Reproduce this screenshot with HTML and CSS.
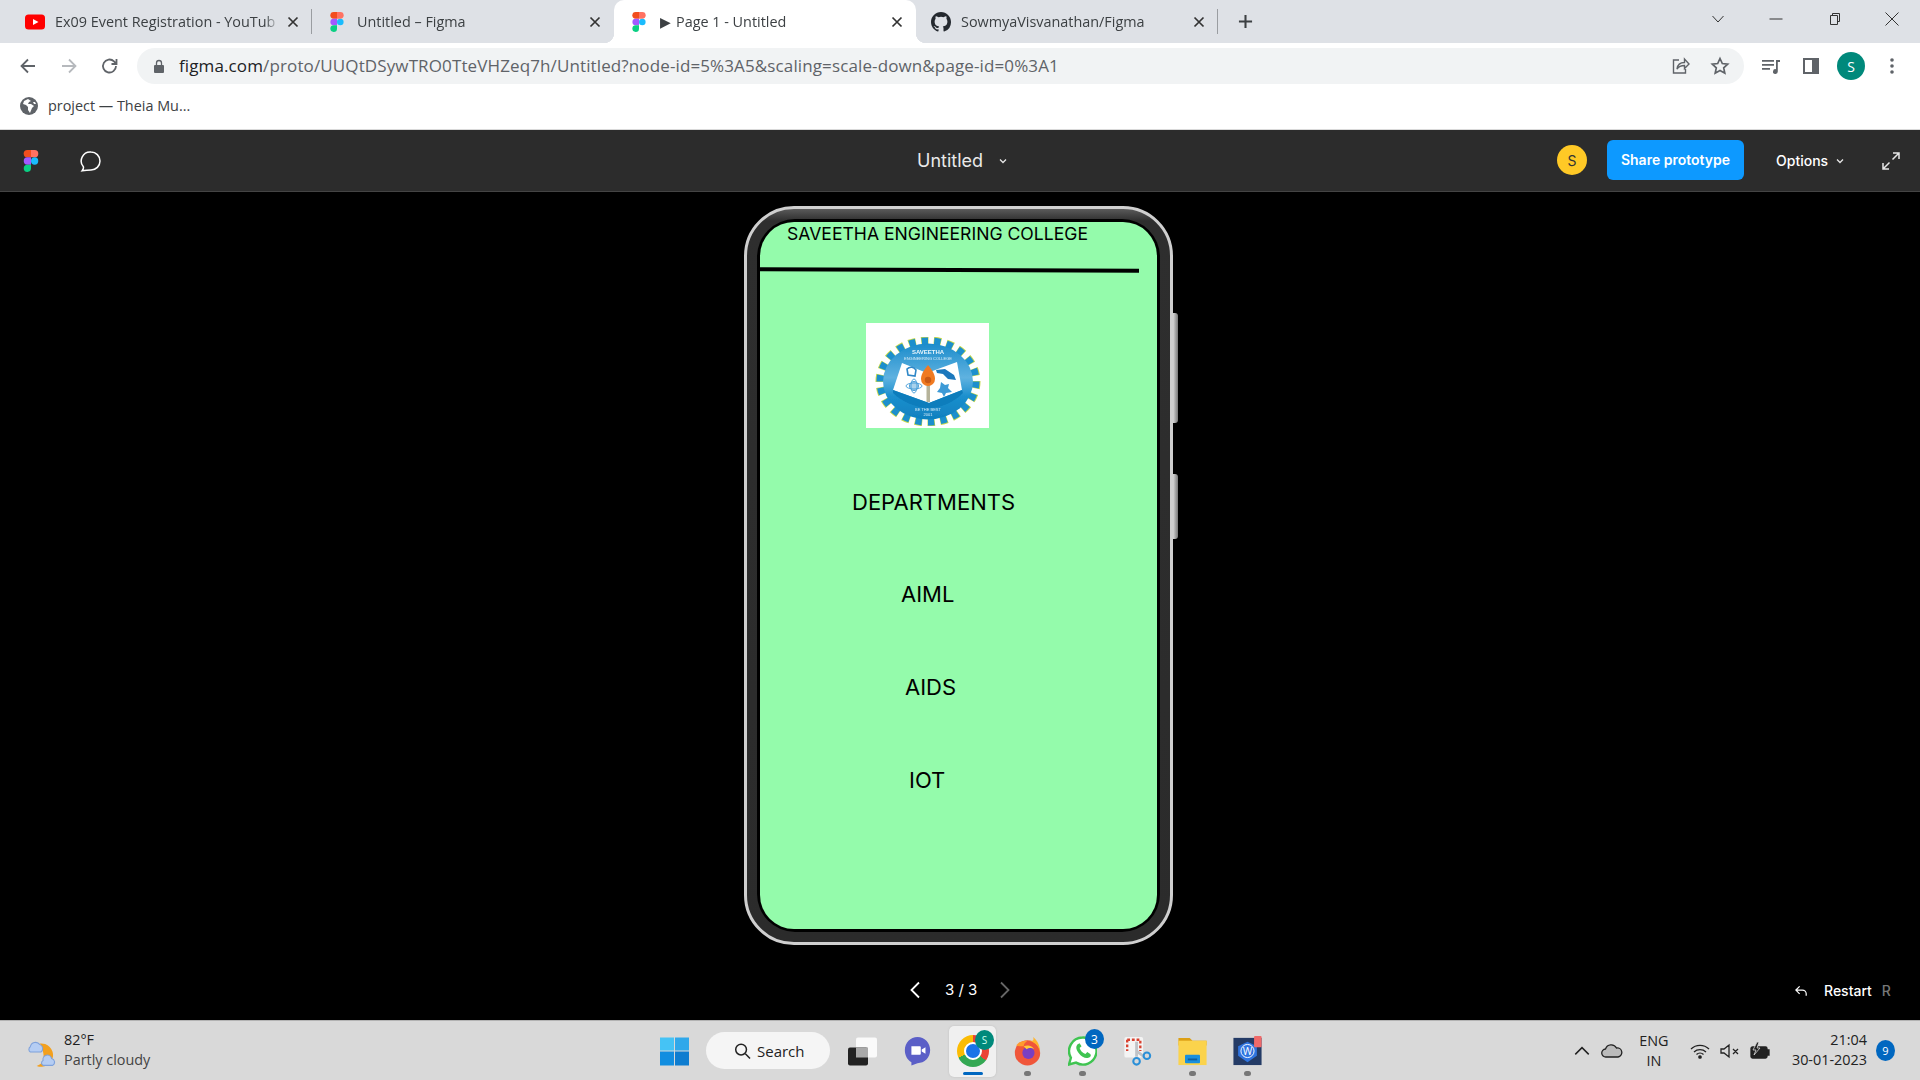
FILE: index.html
```html
<!DOCTYPE html>
<html lang="en">
<head>
<meta charset="utf-8">
<title>Page 1 - Untitled</title>
<link rel="stylesheet" href="styles.css">
</head>
<body>
<div class="tabstrip">
  <div class="tab sep">
    <svg class="fav" viewBox="0 0 20 16"><rect width="20" height="15" y="0.5" rx="3.5" fill="#f00"/><path d="M8 5l5.500 3L8 11z" fill="#fff"/></svg>
    <span class="tab-title">Ex09 Event Registration - YouTub</span>
    <svg class="tab-x" viewBox="0 0 12 12"><path d="M1.500 1.500l9 9M10.500 1.500l-9 9"/></svg>
  </div>
  <div class="tab">
    <svg class="fav" viewBox="0 0 20 20"><use href="#figma"/></svg>
    <span class="tab-title">Untitled – Figma</span>
    <svg class="tab-x" viewBox="0 0 12 12"><path d="M1.500 1.500l9 9M10.500 1.500l-9 9"/></svg>
  </div>
  <div class="tab active">
    <svg class="fav" viewBox="0 0 20 20"><use href="#figma"/></svg>
    <span class="tab-title"><span class="play">▶</span>Page 1 - Untitled</span>
    <svg class="tab-x" viewBox="0 0 12 12"><path d="M1.500 1.500l9 9M10.500 1.500l-9 9"/></svg>
  </div>
  <div class="tab sep">
    <svg class="fav" viewBox="0 0 16 16"><path fill="#24292f" d="M8 0C3.580 0 0 3.580 0 8c0 3.540 2.290 6.530 5.470 7.590.4.070.55-.17.55-.38v-1.340c-2.230.48-2.700-1.070-2.700-1.070-.36-.92-.89-1.170-.89-1.170-.73-.5.050-.49.050-.49.800.06 1.230.83 1.230.83.710 1.220 1.870.87 2.330.66.070-.52.280-.87.510-1.070-1.780-.2-3.640-.89-3.640-3.950 0-.87.310-1.590.82-2.150-.08-.2-.36-1.020.08-2.120 0 0 .67-.21 2.200.82a7.600 7.600 0 0 1 4 0c1.530-1.040 2.200-.82 2.200-.82.440 1.100.16 1.920.08 2.120.51.560.82 1.270.82 2.150 0 3.070-1.870 3.750-3.650 3.950.29.250.54.730.54 1.480v2.200c0 .21.150.46.550.38A8 8 0 0 0 16 8c0-4.420-3.580-8-8-8z"/></svg>
    <span class="tab-title">SowmyaVisvanathan/Figma</span>
    <svg class="tab-x" viewBox="0 0 12 12"><path d="M1.500 1.500l9 9M10.500 1.500l-9 9"/></svg>
  </div>
  <svg class="new-tab" viewBox="0 0 16 16"><path d="M8 1v14M1 8h14"/></svg>
  <div class="win-controls">
    <svg class="wc wc-chev" viewBox="0 0 14 14"><path d="M1.500 4l5.500 6 5.500-6"/></svg>
    <svg class="wc" viewBox="0 0 14 14"><path d="M0.500 7h13"/></svg>
    <svg class="wc" viewBox="0 0 14 14"><path d="M3.500 3.500h7v9h-7zM5.500 3.500v-2h7v8h-2"/></svg>
    <svg class="wc" viewBox="0 0 14 14"><path d="M0.500 0.500l13 13M13.500 0.500l-13 13"/></svg>
  </div>
</div>

<div class="toolbar">
  <svg class="nav-icon" viewBox="0 0 20 20"><path d="M17 10H4M10 3.500L3.500 10l6.500 6.500"/></svg>
  <svg class="nav-icon dim" viewBox="0 0 20 20"><path d="M3 10h13M10 3.500l6.500 6.500-6.500 6.500"/></svg>
  <svg class="nav-icon" viewBox="0 0 20 20"><path d="M16 10a6.500 6.500 0 1 1-2-4.700L16.500 8M16.500 3v5h-5"/></svg>
  <div class="omnibox">
    <svg class="lock" viewBox="0 0 12 14"><path d="M2 6h8a1 1 0 0 1 1 1v6a1 1 0 0 1-1 1H2a1 1 0 0 1-1-1V7a1 1 0 0 1 1-1z" fill="#5f6368"/><path d="M3.500 6V4a2.500 2.500 0 0 1 5 0v2" fill="none" stroke="#5f6368" stroke-width="1.300"/></svg>
    <span class="url"><span class="url-host">figma.com</span>/proto/UUQtDSywTRO0TteVHZeq7h/Untitled?node-id=5%3A5&amp;scaling=scale-down&amp;page-id=0%3A1</span>
    <svg class="omni-icon" viewBox="0 0 20 20"><path d="M9 4H3.500v13h12v-4M7 13c.5-4 3.500-6.500 7.500-6.500V3L19 8l-4.500 4.500V9.500C11 9.500 8.500 10.800 7 13z"/></svg>
    <svg class="omni-icon star" viewBox="0 0 20 20"><path d="M10 2.500l2.300 5 5.400.6-4 3.700 1.100 5.400L10 14.500l-4.800 2.700 1.100-5.400-4-3.700 5.400-.6z"/></svg>
  </div>
  <svg class="ext-icon ext-media" viewBox="0 0 20 20"><path d="M1 4h12v1.800H1zM1 8h12v1.800H1zM1 12h8v1.800H1zM15 4h4v2h-2.200v9.500a2.400 2.400 0 1 1-1.800-2.300z" fill="#5f6368"/></svg>
  <svg class="ext-icon ext-side" viewBox="0 0 20 20"><path d="M2 2h16v16H2zM4 4v12h7V4z" fill="#5f6368" fill-rule="evenodd"/></svg>
  <div class="profile">S</div>
  <svg class="ext-icon dots" viewBox="0 0 20 20"><circle cx="10" cy="4" r="1.800"/><circle cx="10" cy="10" r="1.800"/><circle cx="10" cy="16" r="1.800"/></svg>
</div>

<div class="bookmarks">
  <svg class="globe" viewBox="0 0 18 18"><circle cx="9" cy="9" r="9" fill="#5f6368"/><path d="M8 2l-4 2-1 3 3 1 2 2v3l2 3 2-5 2-2-3-2-3 0 1-2 2-1zM15 5l-2 0 1 2 2 0z" fill="#fff"/></svg>
  <span class="bm-label">project — Theia Mu...</span>
</div>

<header class="figbar">
  <svg class="fig-logo" viewBox="0 0 20 20"><use href="#figma"/></svg>
  <svg class="comment" viewBox="0 0 24 24"><path d="M12 3a9 9 0 0 1 0 18c-2.800 0-6 .3-8.800.8 1-1.400 1.500-2.700 1.200-4A9 9 0 0 1 12 3z"/></svg>
  <div class="fig-title"><span>Untitled</span><svg class="mini-chev" viewBox="0 0 8 6"><path d="M1 1.500l3 3 3-3"/></svg></div>
  <div class="avatar">S</div>
  <button class="share">Share prototype</button>
  <div class="options"><span>Options</span><svg class="mini-chev" viewBox="0 0 8 6"><path d="M1 1.500l3 3 3-3"/></svg></div>
  <svg class="expand" viewBox="0 0 20 20"><path d="M12 2h6v6M18 2l-6.500 6.500M2 12v6h6M2 18l6.500-6.500"/></svg>
</header>

<main class="stage">
  <div class="phone">
    <span class="side-btn btn-a"></span>
    <span class="side-btn btn-b"></span>
    <div class="bezel">
      <div class="screen">
        <p class="college">SAVEETHA ENGINEERING COLLEGE</p>
        <div class="rule"></div>
        <div class="logo">
          <svg viewBox="0 0 123 105" width="123" height="105">
            <defs>
              <filter id="soft" x="-5%" y="-5%" width="110%" height="110%"><feGaussianBlur stdDeviation="0.6"/></filter>
              <linearGradient id="ringfill" x1="0" y1="0" x2="0" y2="1"><stop offset="0" stop-color="#1c8ccb"/><stop offset=".45" stop-color="#5fb2e0"/><stop offset=".7" stop-color="#1b8fcd"/><stop offset="1" stop-color="#0f80bf"/></linearGradient>
            </defs>
            <g filter="url(#soft)">
              <ellipse cx="62" cy="58.500" rx="47.500" ry="40" fill="none" stroke="#c6d84a" stroke-width="10" pathLength="44" stroke-dasharray="1.160 .84" stroke-dashoffset=".08"/>
              <ellipse cx="62" cy="58.500" rx="47" ry="39.500" fill="none" stroke="#1a8fcd" stroke-width="9" pathLength="44" stroke-dasharray="1 1"/>
              <ellipse cx="62" cy="58.500" rx="45" ry="38" fill="url(#ringfill)"/>
              <path d="M36 40l25 10 30-11 5 28-33 13-36-13z" fill="#fff"/>
              <path d="M27 67l36 13 33-13 1 3c-8 8-20 15-34 15S35 78 27 70z" fill="#0f7dbc"/>
              <path d="M41 46c3-3 7-2 9 1l-1 6-7-1z" fill="none" stroke="#2d87c7" stroke-width="1.600"/>
              <path d="M70 47l9-1 9 6 2 5-8-1-5-5-6-1z" fill="#1d78bd"/>
              <circle cx="48" cy="63" r="4.500" fill="#a9d2ec" stroke="#4a9ed8" stroke-width="1"/>
              <ellipse cx="48" cy="63" rx="8" ry="3" fill="none" stroke="#4a9ed8" stroke-width=".9"/>
              <ellipse cx="48" cy="63" rx="3" ry="7" fill="none" stroke="#4a9ed8" stroke-width=".9"/>
              <path d="M75 59l4 3 4-1-1 4 4 4-6 1-2 4-2-4-5-1 3-4z" fill="#3c9ad6"/>
              <rect x="60.500" y="60" width="3.500" height="19" fill="#b6b39a"/>
              <path d="M62 42c5 6 7 10 7 14a7 7 0 0 1-14 0c0-4 2-8 7-14z" fill="#f07a22"/>
              <circle cx="62" cy="57" r="3.200" fill="#c85a14"/>
              <text x="62" y="31" text-anchor="middle" class="logo-t1">SAVEETHA</text>
              <text x="62" y="37" text-anchor="middle" class="logo-t2">ENGINEERING COLLEGE</text>
              <text x="62" y="88" text-anchor="middle" class="logo-t2">BE THE BEST</text>
              <text x="62" y="93" text-anchor="middle" class="logo-t2">2001</text>
            </g>
          </svg>
        </div>
        <p class="dept dept-head">DEPARTMENTS</p>
        <p class="dept dept-aiml">AIML</p>
        <p class="dept dept-aids">AIDS</p>
        <p class="dept dept-iot">IOT</p>
      </div>
    </div>
  </div>
  <div class="pager">
    <svg class="pg-chev" viewBox="0 0 12 18"><path d="M10 1.500L2.500 9l7.500 7.500"/></svg>
    <span class="pg-text">3 / 3</span>
    <svg class="pg-chev off" viewBox="0 0 12 18"><path d="M2 1.500L9.500 9 2 16.500"/></svg>
  </div>
  <div class="restart">
    <svg class="rs-icon" viewBox="0 0 16 14"><path d="M6 2L2 6l4 4M2 6h7a4 4 0 0 1 4 4v2"/></svg>
    <span>Restart</span><span class="rs-key">R</span>
  </div>
</main>

<footer class="taskbar">
  <div class="weather">
    <svg class="wx" viewBox="0 0 32 32"><path d="M14 9a11 11 0 1 1-3 21c7-2 9-9 3-21z" fill="#f3a01e"/><path d="M5 12a5 5 0 0 1 9-2 4 4 0 0 1 1 7H5a3 3 0 0 1 0-5z" fill="#b5cdf3" stroke="#7fa2dc"/><path d="M17 25a4 4 0 0 1 8-2 3.500 3.500 0 0 1 1 6.500h-9a2.500 2.500 0 0 1 0-4.500z" fill="#b5cdf3" stroke="#7fa2dc"/></svg>
    <div class="wx-text"><span class="wx-temp">82°F</span><span class="wx-desc">Partly cloudy</span></div>
  </div>
  <div class="apps">
    <div class="cell"><svg class="i29" viewBox="0 0 29 29"><path d="M0 1h14v13H0z" fill="#45c3f5"/><path d="M15 1h14v13H15z" fill="#30a8ea"/><path d="M0 15h14v14H0z" fill="#128ee0"/><path d="M15 15h14v14H15z" fill="#0e7dd0"/></svg></div>
    <div class="search-pill"><svg class="search-i" viewBox="0 0 18 18"><circle cx="7.500" cy="7.500" r="5.700"/><path d="M12 12l5 5"/></svg><span>Search</span></div>
    <div class="cell"><svg class="i29" viewBox="0 0 29 29"><rect x="8" y="1" width="21" height="20" rx="2" fill="#fafafa"/><rect y="11" width="20" height="18" rx="2" fill="#222"/><rect x="8" y="11" width="12" height="10" fill="#a9a9a9"/></svg></div>
    <div class="cell"><svg class="i29" viewBox="0 0 29 32"><path d="M14.500 1C22 1 28 7 28 15s-6 14-13.500 14L8 31.500V28C3.500 25.500 1 20.500 1 15 1 7 7 1 14.500 1z" fill="#5b5fc7"/><path d="M8 11h9a1 1 0 0 1 1 1v7a1 1 0 0 1-1 1H8zM19 14.500l4-2.500v7l-4-2.500z" fill="#fff"/></svg></div>
    <div class="cell cell-on">
      <div class="chrome"><span class="chrome-core"></span></div>
      <span class="chrome-badge">S</span>
      <span class="run-bar"></span>
    </div>
    <div class="cell"><svg class="i29" viewBox="0 0 30 32"><circle cx="15" cy="18" r="13.500" fill="#f0563a"/><path d="M15 5c6 0 13 5 13 13 1-7-2-13-7-17 1 3 0 4-1 4z" fill="#ffb52e"/><path d="M3 10c3-4 7-5 12-5-3 2-4 4-4 6-3 0-6 0-8-1z" fill="#ff9a2e"/><circle cx="16" cy="18" r="6.500" fill="#7a3fc1"/><path d="M11 11c4-2 9-1 11 3-3-2-6-1-8 0z" fill="#ffca3a"/></svg><span class="run-dot"></span></div>
    <div class="cell"><svg class="i29" viewBox="0 0 30 30"><path d="M15 1a14 14 0 0 0-12 21L1 29l7.300-2A14 14 0 1 0 15 1z" fill="#fff" stroke="#3fc451" stroke-width="2.500"/><path d="M10 8c-2 2-2 5 1 9s7 6 10 5 3-3 2-4l-3-2-2 2c-3-1-5-3-6-6l2-2-2-3z" fill="#3fc451"/></svg><span class="count">3</span><span class="run-dot"></span></div>
    <div class="cell"><svg class="i29" viewBox="0 0 30 32"><rect x="1" y="1" width="20" height="22" rx="2" fill="#f4f4f4"/><path d="M4 4h14v12" fill="none" stroke="#d9412f" stroke-width="2.500" stroke-dasharray="3 2"/><path d="M4 4v12" fill="none" stroke="#d9412f" stroke-width="2.500" stroke-dasharray="3 2"/><path d="M14 6v16M14 16l8 6" stroke="#bfc3c8" stroke-width="3" fill="none"/><circle cx="14" cy="27" r="3.500" fill="none" stroke="#2a8fd8" stroke-width="2.200"/><circle cx="25" cy="21" r="3.500" fill="none" stroke="#2a8fd8" stroke-width="2.200"/></svg></div>
    <div class="cell"><svg class="i29" viewBox="0 0 30 32"><path d="M0 2h12l3 3h15v5H0z" fill="#dc9f14"/><rect y="5" width="30" height="26" fill="#fbd34c"/><rect x="7" y="20" width="16" height="9" rx="1" fill="#1a8fdc"/><rect x="10" y="24" width="10" height="2" fill="#0d5f9f"/></svg><span class="run-dot"></span></div>
    <div class="cell"><svg class="i29" viewBox="0 0 30 32"><rect y="2" width="30" height="29" fill="#243b66"/><path d="M15 6l10 5v10l-10 7-10-7V11z" fill="#2f74e0"/><circle cx="15" cy="16" r="7" fill="none" stroke="#fff" stroke-width="1"/><text x="15" y="20" text-anchor="middle" class="word-w">W</text><rect x="22" y="0" width="8" height="12" rx="1" fill="#ef6a6a"/></svg><span class="run-dot"></span></div>
  </div>
  <div class="tray">
    <svg class="tray-i chev-up" viewBox="0 0 16 16"><path d="M2 11l6-6 6 6"/></svg>
    <svg class="tray-cloud" viewBox="0 0 22 18"><path d="M5 15a4 4 0 0 1-.5-8A6 6 0 0 1 15.500 6 4.500 4.500 0 0 1 17 15z" fill="#bbb" stroke="#222" stroke-width="1.300"/></svg>
    <div class="lang"><span>ENG</span><span>IN</span></div>
    <svg class="tray-i wifi" viewBox="0 0 20 16"><path d="M1 6a13 13 0 0 1 18 0M4 9a9 9 0 0 1 12 0M6.500 11.500a5 5 0 0 1 7 0"/><circle cx="10" cy="14" r="1.200" fill="#222"/></svg>
    <svg class="tray-i sound" viewBox="0 0 20 16"><path d="M1 6h3l5-4v12l-5-4H1zM13 6l5 5M18 6l-5 5"/></svg>
    <svg class="tray-i battery" viewBox="0 0 22 18"><rect x="2" y="5" width="16" height="11" rx="1.500" fill="#222"/><path d="M18 8h2v5h-2" fill="#222"/><path d="M8 0L4 8h3l-2 5 6-7H8l2-6z" fill="#222" stroke="#d9d9d9" stroke-width=".8"/></svg>
    <div class="clock"><span>21:04</span><span>30-01-2023</span></div>
    <span class="notif">9</span>
  </div>
</footer>

<svg class="defs" width="0" height="0">
  <defs>
    <g id="figma">
      <path d="M10 0H6.700a3.300 3.300 0 0 0 0 6.700H10z" fill="#f24e1e"/>
      <path d="M10 0h3.300a3.300 3.300 0 0 1 0 6.700H10z" fill="#ff7262"/>
      <path d="M10 6.700H6.700a3.300 3.300 0 0 0 0 6.600H10z" fill="#a259ff"/>
      <circle cx="13.300" cy="10" r="3.300" fill="#1abcfe"/>
      <path d="M10 13.300H6.700a3.300 3.300 0 1 0 3.300 3.400z" fill="#0acf83"/>
    </g>
  </defs>
</svg>
</body>
</html>
```

FILE: styles.css
```css
* { box-sizing: border-box; margin: 0; padding: 0; }
html, body { width: 1920px; height: 1080px; overflow: hidden; }
body { font-family: "Open Sans", "Liberation Sans", sans-serif; display: flex; flex-direction: column; background: #000; }
svg { display: block; flex: none; }
.defs { position: absolute; }

/* tab strip */
.tabstrip { height: 43px; flex: none; background: #dee1e6; display: flex; align-items: stretch; padding-left: 10px; }
.tab { width: 302px; display: flex; align-items: center; padding: 0 11px 0 15px; position: relative; font-size: 14.400px; color: #3c4043; }
.tab.sep::after { content: ""; position: absolute; right: 0; top: 9px; bottom: 9px; width: 1px; background: #9a9da1; }
.tab.active { background: #fff; border-radius: 10px 10px 0 0; color: #3c4043; }
.tab.active::before, .tab.active::after { content: ""; position: absolute; bottom: 0; width: 10px; height: 10px; }
.tab.active::before { left: -10px; background: radial-gradient(circle at 0 0, #dee1e6 10px, #fff 10.500px); }
.tab.active::after { right: -10px; background: radial-gradient(circle at 100% 0, #dee1e6 10px, #fff 10.500px); }
.fav { width: 20px; height: 20px; margin-right: 10px; }
.tab-title { flex: 1; min-width: 0; white-space: nowrap; -webkit-mask-image: linear-gradient(to left, transparent 0, #000 14px); mask-image: linear-gradient(to left, transparent 0, #000 14px); }
.play { font-size: 14px; margin: 0 5px 0 1px; color: #3c4043; vertical-align: 0; }
.tab-x { width: 12px; height: 12px; margin: 0 2px 0 8px; fill: none; stroke: #333; stroke-width: 1.700; }
.new-tab { width: 15px; height: 15px; margin: 14px 0 0 20px; fill: none; stroke: #3c4043; stroke-width: 2.200; }
.win-controls { margin-left: auto; display: flex; align-items: center; gap: 44px; padding: 0 21px 6px 0; }
.wc { width: 14px; height: 14px; fill: none; stroke: #333; stroke-width: 1; }

/* toolbar */
.toolbar { height: 42px; flex: none; background: #fff; display: flex; align-items: center; padding: 4px 0 0 18px; }
.nav-icon { width: 20px; height: 20px; margin-right: 21px; fill: none; stroke: #5f6368; stroke-width: 1.800; }
.nav-icon.dim { stroke: #b6b9bd; }
.omnibox { width: 1607px; height: 36px; margin-left: -4px; background: #f1f3f4; border-radius: 18px; display: flex; align-items: center; padding: 0 14px 0 16px; font-size: 17px; }
.lock { width: 12px; height: 14px; margin-right: 14px; }
.url { flex: 1; color: #5f6368; white-space: nowrap; letter-spacing: 0.120px; line-height: 24px; padding-bottom: 1px; }
.url-host { color: #202124; }
.omni-icon { width: 20px; height: 20px; margin-left: 20px; fill: none; stroke: #5f6368; stroke-width: 1.400; }
.star { stroke-width: 1.700; }
.ext-icon { width: 20px; height: 20px; }
.ext-media { margin-left: 17px; }
.ext-side { margin-left: 20px; }
.profile { width: 28px; height: 28px; margin-left: 16px; border-radius: 50%; background: #00897b; color: #fff; font-size: 14px; display: flex; align-items: center; justify-content: center; }
.dots { fill: #5f6368; margin-left: 17px; }

/* bookmarks */
.bookmarks { height: 45px; flex: none; background: #fff; border-bottom: 1px solid #d9d9d9; display: flex; align-items: center; padding: 0 0 3px 20px; font-size: 14.400px; color: #3c4043; }
.globe { width: 18px; height: 18px; margin-right: 10px; }

/* figma bar */
.figbar { height: 62px; flex: none; background: #2c2c2c; border-bottom: 1px solid #444; display: flex; align-items: center; padding-left: 21px; color: #fff; font-family: Inter, sans-serif; }
.fig-logo { width: 20px; height: 20px; transform: scale(1.100); }
.comment { width: 24px; height: 24px; margin-left: 38px; fill: none; stroke: #fff; stroke-width: 1.500; }
.fig-title { display: flex; align-items: center; margin-left: 814px; font-size: 18px; color: #e9e9e9; width: 593px; }
.mini-chev { width: 8px; height: 6px; margin-left: 16px; fill: none; stroke: #e6e6e6; stroke-width: 1.300; }
.avatar { width: 30px; height: 30px; border-radius: 50%; background: #ffc926; color: #333; font-size: 14px; display: flex; align-items: center; justify-content: center; margin: 0 0 1px 47px; }
.share { width: 137px; height: 40px; margin: 0 0 1px 20px; padding-bottom: 2px; border: 0; border-radius: 6px; background: #0d99ff; color: #fff; font: 600 14px Inter, sans-serif; }
.options { display: flex; align-items: center; margin-left: 32px; font-size: 14px; font-weight: 500; }
.options .mini-chev { margin-left: 8px; }
.expand { width: 20px; height: 20px; margin-left: 37px; fill: none; stroke: #e6e6e6; stroke-width: 1.500; }

/* stage */
.stage { flex: 1; min-height: 0; background: #000; position: relative; padding: 14px 0 0 744px; }
.phone { width: 429px; height: 739px; position: relative; border: 3px solid #cfcfcf; border-radius: 50px; background: linear-gradient(#5a5a5a 0, #2e2e2e 12px, #2b2b2b 100%); padding: 10px; }
.side-btn { position: absolute; left: 426px; width: 5px; background: linear-gradient(to right, #d6d6d6, #777); border-radius: 0 3px 3px 0; }
.btn-a { top: 104px; height: 110px; }
.btn-b { top: 265px; height: 65px; }
.bezel { width: 100%; height: 100%; background: #000; border-radius: 38px; padding: 3px; }
.screen { width: 100%; height: 100%; background: #94fbab; border-radius: 34px; overflow: hidden; color: #000; font-family: Inter, sans-serif; }
.college { font-size: 17.600px; line-height: 22px; margin: 1px 0 0 27px; white-space: nowrap; }
.rule { width: 379px; height: 4px; margin-top: 23px; background: #000; transform: rotate(0.2deg); }
.logo { width: 123px; height: 105px; margin: 51px 0 0 106px; background: #fff; overflow: hidden; }
.logo-t1 { font: 700 6px "Liberation Sans", sans-serif; fill: #eaf6fc; }
.logo-t2 { font: 400 4px "Liberation Sans", sans-serif; fill: #d9edf8; }
.word-w { font: 11px "Open Sans", sans-serif; fill: #fff; }
.dept { font-size: 22px; line-height: 28px; white-space: nowrap; }
.dept-head { margin: 60px 0 0 92px; }
.dept-aiml { margin: 64px 0 0 141px; }
.dept-aids { margin: 65px 0 0 145px; }
.dept-iot { margin: 65px 0 0 149px; }
.pager { position: absolute; left: 909px; top: 788px; display: flex; align-items: center; color: #fff; font: 400 15px Inter, sans-serif; }
.pg-chev { width: 12px; height: 18px; fill: none; stroke: #fff; stroke-width: 1.800; }
.pg-chev.off { stroke: #666; }
.pg-text { margin: 0 22px 0 24px; }
.restart { position: absolute; left: 1794px; top: 790px; display: flex; align-items: center; color: #fff; font: 500 14px Inter, sans-serif; }
.rs-icon { width: 15px; height: 14px; margin-right: 15px; fill: none; stroke: #fff; stroke-width: 1.300; }
.rs-key { color: #777; margin-left: 10px; }

/* taskbar */
.taskbar { height: 60px; flex: none; background: #d9d9d9; border-top: 1px solid #b3b3b3; display: flex; align-items: center; position: relative; }
.weather { width: 647px; display: flex; align-items: center; padding-left: 25px; }
.wx { width: 34px; height: 34px; margin-right: 5px; }
.wx-text { display: flex; flex-direction: column; font-size: 14.400px; line-height: 20px; color: #1f1f1f; padding-bottom: 2px; }
.wx-desc { color: #444; }
.apps { display: flex; align-items: center; height: 100%; }
.cell { width: 55px; height: 100%; display: flex; align-items: center; justify-content: center; position: relative; }
.i29 { width: 29px; height: 30px; }
.cell-on::before { content: ""; position: absolute; left: 4px; right: 4px; top: 5px; bottom: 3px; background: #f0f0f0; border-radius: 5px; box-shadow: 0 0 2px #bbb; }
.search-pill { width: 124px; height: 37px; margin: 0 5px 0 4px; background: #f5f5f5; border-radius: 19px; display: flex; align-items: center; padding-left: 28px; font-size: 15px; color: #222; }
.search-i { width: 17px; height: 18px; margin-right: 6px; fill: none; stroke: #222; stroke-width: 1.600; }
.chrome { width: 32px; height: 32px; border-radius: 50%; background: conic-gradient(#ea4335 0 35%, #34a853 35% 68%, #fbbc04 68% 100%); display: flex; align-items: center; justify-content: center; position: relative; }
.chrome-core { width: 14px; height: 14px; border-radius: 50%; background: #1a73e8; border: 2px solid #fff; box-sizing: content-box; }
.chrome-badge { position: absolute; left: 30px; top: 9px; width: 19px; height: 20px; border-radius: 50%; background: #00897b; color: #cfe; font-size: 10px; display: flex; align-items: center; justify-content: center; }
.run-bar { position: absolute; left: 18px; top: 51px; width: 20px; height: 3px; border-radius: 2px; background: #0067c0; }
.run-dot { position: absolute; left: 24px; top: 50px; width: 7px; height: 5px; border-radius: 3px; background: #777; }
.count { position: absolute; left: 30px; top: 8px; width: 19px; height: 20px; border-radius: 50%; background: #0067c0; color: #fff; font-size: 12px; display: flex; align-items: center; justify-content: center; }
.tray { display: flex; align-items: center; margin-left: auto; padding-right: 25px; color: #222; }
.tray-i { fill: none; stroke: #222; stroke-width: 1.300; }
.chev-up { width: 18px; height: 18px; }
.tray-cloud { width: 22px; height: 18px; margin-left: 10px; }
.lang { display: flex; flex-direction: column; align-items: center; font-size: 14.400px; line-height: 20px; margin-left: 14px; width: 34px; }
.wifi { width: 20px; height: 16px; margin-left: 19px; }
.sound { width: 20px; height: 16px; margin-left: 10px; }
.battery { width: 22px; height: 18px; margin-left: 9px; }
.clock { display: flex; flex-direction: column; align-items: flex-end; font-size: 14.400px; line-height: 20px; margin-left: 21px; padding-bottom: 2px; }
.notif { width: 19px; height: 21px; border-radius: 50%; background: #0067c0; color: #fff; font-size: 11px; display: flex; align-items: center; justify-content: center; margin-left: 9px; }
```
